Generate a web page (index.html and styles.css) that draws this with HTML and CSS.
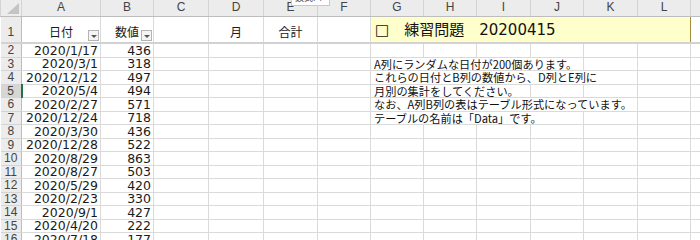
FILE: index.html
```html
<!DOCTYPE html>
<html lang="ja">
<head>
<meta charset="utf-8">
<title>Sheet</title>
<link rel="stylesheet" href="styles.css">
</head>
<body>
<div class="tip">数式バー</div>
<table class="sheet">
  <colgroup>
    <col class="c-rh"><col class="c-a"><col class="c-b"><col class="c-c"><col class="c-d"><col class="c-e"><col class="c-f"><col class="c-g"><col class="c-h"><col class="c-i"><col class="c-j"><col class="c-k"><col class="c-l"><col class="c-m">
  </colgroup>
  <tr class="colhead">
    <th class="corner"></th><th>A</th><th>B</th><th>C</th><th>D</th><th>E</th><th>F</th><th>G</th><th>H</th><th>I</th><th>J</th><th>K</th><th>L</th><th></th>
  </tr>
  <tr class="r1">
    <th class="rh">1</th>
    <td class="hd">日付<span class="dd"></span></td>
    <td class="hd">数値<span class="dd"></span></td>
    <td></td>
    <td class="hd">月</td>
    <td class="hd">合計</td>
    <td></td>
    <td class="title" colspan="6"><span class="box">□</span>　練習問題　<span class="tnum">20200415</span></td>
    <td></td>
  </tr>
  <tr class="tall"><th class="rh">2</th><td class="num">2020/1/17</td><td class="num">436</td><td></td><td></td><td></td><td></td><td></td><td></td><td></td><td></td><td></td><td></td><td></td></tr>
  <tr><th class="rh">3</th><td class="num">2020/3/1</td><td class="num">318</td><td></td><td></td><td></td><td></td><td class="note" colspan="4">A列にランダムな日付が200個あります。</td><td></td><td></td><td></td></tr>
  <tr class="tall"><th class="rh">4</th><td class="num">2020/12/12</td><td class="num">497</td><td></td><td></td><td></td><td></td><td class="note" colspan="5">これらの日付とB列の数値から、D列とE列に</td><td></td><td></td></tr>
  <tr><th class="rh sel">5</th><td class="num">2020/5/4</td><td class="num">494</td><td></td><td></td><td></td><td></td><td class="note" colspan="3">月別の集計をしてください。</td><td></td><td></td><td></td><td></td></tr>
  <tr class="tall"><th class="rh">6</th><td class="num">2020/2/27</td><td class="num">571</td><td></td><td></td><td></td><td></td><td class="note" colspan="5">なお、A列B列の表はテーブル形式になっています。</td><td></td><td></td></tr>
  <tr><th class="rh">7</th><td class="num">2020/12/24</td><td class="num">718</td><td></td><td></td><td></td><td></td><td class="note" colspan="4">テーブルの名前は「Data」です。</td><td></td><td></td><td></td></tr>
  <tr class="tall"><th class="rh">8</th><td class="num">2020/3/30</td><td class="num">436</td><td></td><td></td><td></td><td></td><td></td><td></td><td></td><td></td><td></td><td></td><td></td></tr>
  <tr><th class="rh">9</th><td class="num">2020/12/28</td><td class="num">522</td><td></td><td></td><td></td><td></td><td></td><td></td><td></td><td></td><td></td><td></td><td></td></tr>
  <tr class="tall"><th class="rh">10</th><td class="num">2020/8/29</td><td class="num">863</td><td></td><td></td><td></td><td></td><td></td><td></td><td></td><td></td><td></td><td></td><td></td></tr>
  <tr><th class="rh">11</th><td class="num">2020/8/27</td><td class="num">503</td><td></td><td></td><td></td><td></td><td></td><td></td><td></td><td></td><td></td><td></td><td></td></tr>
  <tr class="tall"><th class="rh">12</th><td class="num">2020/5/29</td><td class="num">420</td><td></td><td></td><td></td><td></td><td></td><td></td><td></td><td></td><td></td><td></td><td></td></tr>
  <tr><th class="rh">13</th><td class="num">2020/2/23</td><td class="num">330</td><td></td><td></td><td></td><td></td><td></td><td></td><td></td><td></td><td></td><td></td><td></td></tr>
  <tr class="tall"><th class="rh">14</th><td class="num">2020/9/1</td><td class="num">427</td><td></td><td></td><td></td><td></td><td></td><td></td><td></td><td></td><td></td><td></td><td></td></tr>
  <tr><th class="rh">15</th><td class="num">2020/4/20</td><td class="num">222</td><td></td><td></td><td></td><td></td><td></td><td></td><td></td><td></td><td></td><td></td><td></td></tr>
  <tr class="tall"><th class="rh">16</th><td class="num">2020/7/18</td><td class="num">177</td><td></td><td></td><td></td><td></td><td></td><td></td><td></td><td></td><td></td><td></td><td></td></tr>
</table>
</body>
</html>
```
FILE: styles.css
```css
html, body {
  margin: 0;
  padding: 0;
}
body {
  width: 700px;
  height: 240px;
  overflow: hidden;
  background: #fff;
  position: relative;
  font-family: "DejaVu Sans", "Noto Sans CJK JP", sans-serif;
}
.sheet {
  border-collapse: collapse;
  table-layout: fixed;
  width: 700px;
}
.c-rh { width: 21px; }
.c-a { width: 79px; }
.c-b { width: 53px; }
.c-c { width: 55px; }
.c-d { width: 55px; }
.c-e { width: 54px; }
.c-f { width: 53px; }
.c-g { width: 53px; }
.c-h { width: 53px; }
.c-i { width: 54px; }
.c-j { width: 53px; }
.c-k { width: 54px; }
.c-l { width: 53px; }
.c-m { width: 10px; }

td, th {
  border: 1px solid #dadada;
  padding: 0 2px;
  overflow: hidden;
  white-space: nowrap;
  height: 12px;
  line-height: 12px;
  font-size: 12.5px;
  font-weight: normal;
  color: #1a1a1a;
  box-sizing: border-box;
}
.tall td, .tall th {
  line-height: 13px;
}
.colhead th {
  height: 16px;
  background: #ececec;
  color: #444;
  font-family: "Liberation Sans", "Noto Sans CJK JP", sans-serif;
  font-size: 12px;
  line-height: 15px;
  text-align: center;
  border-color: #d4d4d4;
  border-bottom: 1px solid #bdbdbd;
  border-top: none;
}
.corner {
  position: relative;
}
.corner::after {
  content: "";
  position: absolute;
  right: 2px;
  bottom: 2px;
  width: 0;
  height: 0;
  border-left: 12px solid transparent;
  border-bottom: 11px solid #c4c4c4;
}
.rh {
  background: #ececec;
  color: #444;
  font-family: "Liberation Sans", "Noto Sans CJK JP", sans-serif;
  font-size: 12px;
  text-align: center;
  vertical-align: top;
  padding: 0;
  border-color: #d4d4d4;
  border-right: 1px solid #bdbdbd;
  border-left: none;
}
.rh.sel {
  background: #d6d6d6;
  border-right: 2px solid #217346;
}
.r1 td, .r1 th {
  height: 27px;
  border-bottom: 2px solid #d2d2d2;
}
.r1 .rh {
  vertical-align: middle;
  padding-top: 6px;
}
.hd {
  position: relative;
  text-align: center;
  vertical-align: bottom;
  font-family: "Noto Sans CJK JP", sans-serif;
  font-size: 12px;
  line-height: 20px;
}
.dd {
  position: absolute;
  right: 1px;
  bottom: 1px;
  width: 11px;
  height: 11px;
  box-sizing: border-box;
  border: 1px solid #b4b4b4;
  background: #f4f4f4;
}
.dd::after {
  content: "";
  position: absolute;
  left: 2px;
  top: 4px;
  border-left: 3px solid transparent;
  border-right: 3px solid transparent;
  border-top: 3px solid #555;
}
.num {
  text-align: right;
  font-size: 12.5px;
}
.title {
  background: #ffffcc;
  border: 1px solid #c9b45e;
  border-right-color: #a48c3c;
  border-bottom: 2px solid #b9a24c;
  font-family: "Noto Sans CJK JP", sans-serif;
  font-size: 15px;
  line-height: 22px;
  padding-left: 4px;
  color: #111;
}
.box {
  font-family: "DejaVu Sans", sans-serif;
  font-size: 15px;
}
.tnum {
  font-family: "DejaVu Sans", "Noto Sans CJK JP", sans-serif;
  font-size: 15px;
}
.note {
  background: #fff;
  font-family: "Noto Sans CJK JP", sans-serif;
  font-size: 11.2px;
  padding-left: 3px;
  color: #111;
}
.tip {
  position: absolute;
  left: 291px;
  top: -9px;
  width: 34px;
  height: 13px;
  background: #fff;
  border: 1px solid #c8c8c8;
  font-family: "Noto Sans CJK JP", sans-serif;
  font-size: 9px;
  line-height: 11px;
  color: #555;
  overflow: hidden;
  padding-left: 3px;
  z-index: 2;
}
```
